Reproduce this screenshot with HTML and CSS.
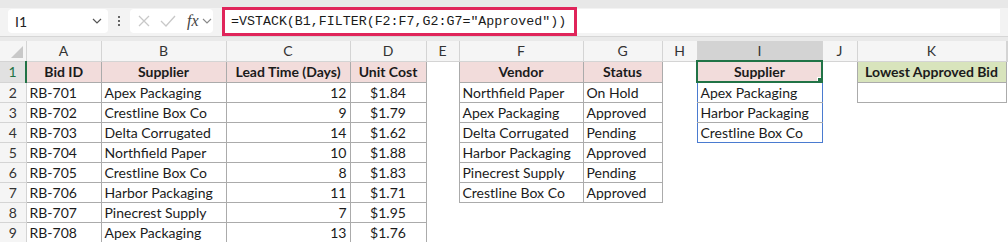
FILE: index.html
```html
<!DOCTYPE html>
<html>
<head>
<meta charset="utf-8">
<link rel="stylesheet" href="styles.css">
</head>
<body>
<div class="fbar">
  <div class="namebox"><span>I1</span><svg class="chev" width="10" height="6" viewBox="0 0 10 6"><path d="M1 1l4 4 4-4" fill="none" stroke="#555" stroke-width="1.2"/></svg></div>
  <div class="dots"><i></i><i></i><i></i></div>
  <div class="fxbox">
    <svg width="14" height="14" viewBox="0 0 14 14"><path d="M2 2l10 10M12 2L2 12" stroke="#c8c8c8" stroke-width="1.3"/></svg>
    <svg width="16" height="14" viewBox="0 0 16 14"><path d="M1 7l5 5L15 2" fill="none" stroke="#c8c8c8" stroke-width="1.3"/></svg>
    <span class="fx">fx</span>
    <svg class="chev" width="10" height="6" viewBox="0 0 10 6"><path d="M1 1l4 4 4-4" fill="none" stroke="#888" stroke-width="1.1"/></svg>
  </div>
  <div class="formula"><div class="hl">=VSTACK(B1,FILTER(F2:F7,G2:G7="Approved"))</div></div>
</div>
<div class="band"></div>
<table class="sheet">
  <colgroup>
    <col style="width:26px"><col style="width:75px"><col style="width:125px"><col style="width:124px"><col style="width:76px"><col style="width:33px"><col style="width:124px"><col style="width:79px"><col style="width:35px"><col style="width:125px"><col style="width:35px"><col style="width:149px"><col>
  </colgroup>
  <tr class="colhead">
    <th class="corner"><svg width="14" height="14" viewBox="0 0 14 14"><path d="M13 1V13H1Z" fill="#c8c8c8"/></svg></th>
    <th>A</th><th>B</th><th>C</th><th>D</th><th>E</th><th>F</th><th>G</th><th>H</th><th class="sel">I</th><th>J</th><th>K</th><th></th>
  </tr>
  <tr>
    <th class="rh rsel">1</th>
    <td class="b hd">Bid ID</td><td class="b hd">Supplier</td><td class="b hd">Lead Time (Days)</td><td class="b hd">Unit Cost</td><td></td>
    <td class="b hd">Vendor</td><td class="b hd">Status</td><td></td>
    <td class="b hd active">Supplier<span class="handle"></span></td><td></td>
    <td class="b hd green">Lowest Approved Bid</td><td></td>
  </tr>
  <tr>
    <th class="rh">2</th>
    <td class="b">RB-701</td><td class="b">Apex Packaging</td><td class="b num">12</td><td class="b ctr">$1.84</td><td></td>
    <td class="b">Northfield Paper</td><td class="b">On Hold</td><td></td>
    <td class="b spill">Apex Packaging</td><td></td><td class="b"></td><td></td>
  </tr>
  <tr>
    <th class="rh">3</th>
    <td class="b">RB-702</td><td class="b">Crestline Box Co</td><td class="b num">9</td><td class="b ctr">$1.79</td><td></td>
    <td class="b">Apex Packaging</td><td class="b">Approved</td><td></td>
    <td class="b spill">Harbor Packaging</td><td></td><td></td><td></td>
  </tr>
  <tr>
    <th class="rh">4</th>
    <td class="b">RB-703</td><td class="b">Delta Corrugated</td><td class="b num">14</td><td class="b ctr">$1.62</td><td></td>
    <td class="b">Delta Corrugated</td><td class="b">Pending</td><td></td>
    <td class="b spill last">Crestline Box Co</td><td></td><td></td><td></td>
  </tr>
  <tr>
    <th class="rh">5</th>
    <td class="b">RB-704</td><td class="b">Northfield Paper</td><td class="b num">10</td><td class="b ctr">$1.88</td><td></td>
    <td class="b">Harbor Packaging</td><td class="b">Approved</td><td></td><td></td><td></td><td></td><td></td>
  </tr>
  <tr>
    <th class="rh">6</th>
    <td class="b">RB-705</td><td class="b">Crestline Box Co</td><td class="b num">8</td><td class="b ctr">$1.83</td><td></td>
    <td class="b">Pinecrest Supply</td><td class="b">Pending</td><td></td><td></td><td></td><td></td><td></td>
  </tr>
  <tr>
    <th class="rh">7</th>
    <td class="b">RB-706</td><td class="b">Harbor Packaging</td><td class="b num">11</td><td class="b ctr">$1.71</td><td></td>
    <td class="b">Crestline Box Co</td><td class="b">Approved</td><td></td><td></td><td></td><td></td><td></td>
  </tr>
  <tr>
    <th class="rh">8</th>
    <td class="b">RB-707</td><td class="b">Pinecrest Supply</td><td class="b num">7</td><td class="b ctr">$1.95</td><td></td>
    <td></td><td></td><td></td><td></td><td></td><td></td><td></td>
  </tr>
  <tr>
    <th class="rh">9</th>
    <td class="b">RB-708</td><td class="b">Apex Packaging</td><td class="b num">13</td><td class="b ctr">$1.76</td><td></td>
    <td></td><td></td><td></td><td></td><td></td><td></td><td></td>
  </tr>
</table>
</body>
</html>
```
FILE: styles.css
```css
html, body {
  margin: 0;
  padding: 0;
  background: #fff;
  overflow: hidden;
}
body {
  font-family: Lato, "Liberation Sans", sans-serif;
  color: #1b1b1b;
}

.fbar {
  display: flex;
  align-items: center;
  height: 36px;
  padding-top: 6px;
  box-sizing: border-box;
  background: linear-gradient(#e8e8e8 0 8px, #f3f3f3 8px);
}
.namebox {
  display: flex;
  align-items: center;
  justify-content: space-between;
  width: 100px;
  height: 24px;
  margin-left: 8px;
  padding: 0 6px 0 7px;
  box-sizing: border-box;
  background: #fff;
  border-radius: 4px;
  font-size: 14px;
  color: #222;
}
.dots {
  display: flex;
  flex-direction: column;
  gap: 2px;
  margin: 0 10px;
}
.dots i {
  width: 2px;
  height: 2px;
  background: #666;
}
.fxbox {
  display: flex;
  align-items: center;
  gap: 9px;
  width: 83px;
  height: 24px;
  padding-left: 7px;
  box-sizing: border-box;
  background: #fff;
  border-radius: 4px;
}
.fxbox .fx {
  font-family: "Liberation Serif", serif;
  font-style: italic;
  font-size: 16px;
  color: #444;
  margin-left: 2px;
  margin-right: -6px;
}
.formula {
  flex: 1;
  display: flex;
  align-items: center;
  height: 24px;
  margin: 0 8px 0 9px;
  background: #fff;
}
.hl {
  height: 29px;
  width: 355px;
  box-sizing: border-box;
  border: 3px solid #e0245a;
  padding-left: 6px;
  line-height: 23px;
  font-family: "Liberation Mono", monospace;
  font-size: 13.3px;
  color: #1a1a1a;
  white-space: nowrap;
}

.band {
  height: 4px;
  background: #e9e9e9;
  border-top: 1px solid #d6d6d6;
}

.sheet {
  table-layout: fixed;
  border-collapse: collapse;
  width: 1008px;
  font-size: 14px;
}
.sheet tr {
  height: 20px;
}
.sheet td, .sheet th {
  padding: 0 3px;
  white-space: nowrap;
  overflow: hidden;
  line-height: 19px;
}
.colhead th {
  font-weight: normal;
  font-size: 14px;
  color: #333;
  background: #f5f5f5;
  border-right: 1px solid #d4d4d4;
  border-bottom: 1px solid #d4d4d4;
  text-align: center;
}
.colhead th.sel {
  background: #d3d3d3;
  border-bottom: 2px solid #217346;
}
.colhead .corner {
  text-align: right;
  vertical-align: bottom;
  padding: 0 2px 2px 0;
  line-height: 0;
}
.rh {
  font-weight: normal;
  font-size: 14px;
  color: #333;
  background: #f5f5f5;
  border-right: 1px solid #d4d4d4;
  border-bottom: 1px solid #d4d4d4;
  text-align: center;
}
.rh.rsel {
  background: #e1e1e1;
  color: #217346;
  border-right: 2px solid #217346;
}

.b {
  border: 1px solid #ababab;
}
.hd {
  font-weight: bold;
  text-align: center;
  background: #f2dcdb;
}
.hd.green {
  background: #d8e4bc;
}
.num {
  text-align: right;
  padding-right: 7px;
}
.ctr {
  text-align: center;
}
.spill {
  border-left: 1px solid #4a7bd0;
  border-right: 1px solid #4a7bd0;
}
.spill.last {
  border-bottom: 1px solid #4a7bd0;
}
.active {
  position: relative;
  overflow: visible;
  border: 2px solid #217346;
}
.handle {
  position: absolute;
  right: -4px;
  bottom: -4px;
  width: 6px;
  height: 6px;
  background: #217346;
  border: 1px solid #fff;
}
```
